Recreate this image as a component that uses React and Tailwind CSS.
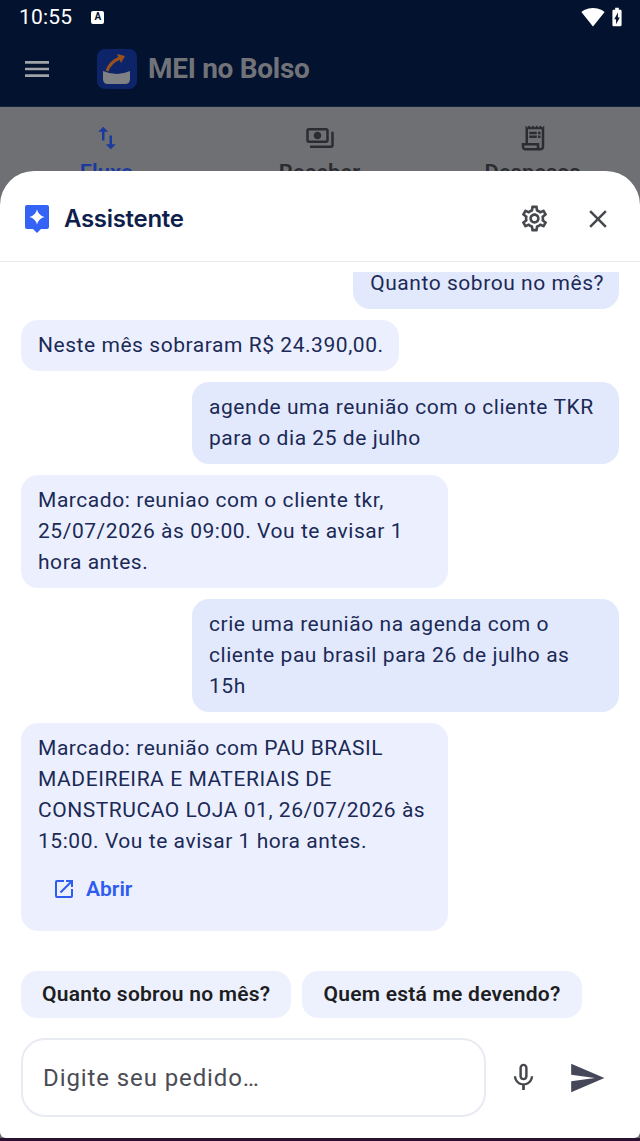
import React from "react";
import {
  MdMenu,
  MdSwapVert,
  MdOutlinePayments,
  MdOutlineReceiptLong,
  MdOutlineSettings,
  MdClose,
  MdOpenInNew,
  MdMicNone,
  MdSend,
  MdSignalWifi4Bar,
  MdBatteryChargingFull,
} from "react-icons/md";

function Bubble({ mine, className = "", children }) {
  return (
    <div
      className={`shrink-0 rounded-[17px] py-[10px] pr-[15px] pl-[17px] text-[21px] leading-[31px] tracking-[0.55px] text-[#1b2a56] ${
        mine ? "self-end bg-[#e3e9fc]" : "self-start bg-[#ecf0fe]"
      } ${className}`}
    >
      {children}
    </div>
  );
}

function Tab({ icon, label, active }) {
  return (
    <div className="flex w-[213px] flex-col items-center pt-[16px]">
      <div className={active ? "text-[#1b3a9e]" : "text-[#2b2c31]"}>{icon}</div>
      <div className={`mt-[7px] text-[22px] leading-[26px] font-semibold ${active ? "text-[#1b3a9e]" : "text-[#2b2c31]"}`}>
        {label}
      </div>
    </div>
  );
}

function Logo() {
  return (
    <svg width="40" height="40" viewBox="0 0 40 40">
      <rect width="40" height="40" rx="8" fill="#0d2568" />
      <path d="M6 22 Q20 28 33 22 V30 Q33 35 28 35 H11 Q6 35 6 30 Z" fill="#7f8185" />
      <path d="M10 22 Q13 13 23 9" fill="none" stroke="#98501c" strokeWidth="3" />
      <path d="M20 5 L28 7 L24 14 Z" fill="#98501c" />
    </svg>
  );
}

function AssistantIcon() {
  return (
    <svg width="26" height="30" viewBox="0 0 26 30">
      <path
        d="M3 1 H23 Q25 1 25 3 V23 Q25 25 23 25 H17 L13 29 L9 25 H3 Q1 25 1 23 V3 Q1 1 3 1 Z"
        fill="#3563f5"
      />
      <path d="M13 5.5 Q14.5 11.5 20.5 13 Q14.5 14.5 13 20.5 Q11.5 14.5 5.5 13 Q11.5 11.5 13 5.5 Z" fill="#fff" />
    </svg>
  );
}

export default function App() {
  return (
    <div className="flex h-[1141px] w-[640px] flex-col overflow-hidden bg-[#6f7074] font-['Roboto',sans-serif]">
      {/* status bar and app bar, dimmed by the sheet */}
      <header className="h-[107px] shrink-0 border-b border-[#15203c] bg-[#02122f]">
        <div className="flex h-[32px] items-center justify-between pt-[2px] pr-[15px] pl-[19px] text-white">
          <div className="flex items-center gap-[19px]">
            <span className="text-[21px] leading-none tracking-[0.2px]">10:55</span>
            <span className="flex h-[13px] w-[13px] items-center justify-center rounded-[2px] bg-white text-[10px] leading-none font-bold text-[#02122f]">
              A
            </span>
          </div>
          <div className="flex items-center gap-[4px]">
            <MdSignalWifi4Bar size={24} />
            <MdBatteryChargingFull size={22} className="-mx-[3px]" />
          </div>
        </div>
        <div className="mt-[12px] flex h-[50px] items-center pl-[21px]">
          <MdMenu size={32} className="text-[#a2a3a6]" />
          <div className="ml-[44px]">
            <Logo />
          </div>
          <span className="ml-[11px] text-[28px] font-bold tracking-[-0.3px] text-[#727378]">MEI no Bolso</span>
        </div>
      </header>

      <div className="flex h-[64px] shrink-0 overflow-hidden">
        <Tab active label="Fluxo" icon={<MdSwapVert size={30} />} />
        <Tab label="Receber" icon={<MdOutlinePayments size={30} />} />
        <Tab label="Despesas" icon={<MdOutlineReceiptLong size={30} />} />
      </div>

      <section className="flex min-h-0 flex-1 flex-col rounded-t-[34px] rounded-b-[6px] bg-white">
        <div className="flex h-[91px] shrink-0 items-center border-b border-[#e9e9ee] pt-[5px] pr-[27px] pl-[24px]">
          <AssistantIcon />
          <h1 className="ml-[14px] font-['Inter',sans-serif] text-[24px] font-semibold tracking-[-0.3px] text-[#0f1f4d]">
            Assistente
          </h1>
          <MdOutlineSettings size={31} className="ml-auto text-[#46484e]" />
          <MdClose size={30} className="ml-[33px] text-[#46484e]" />
        </div>

        <div className="mx-[21px] mt-[10px] flex min-h-0 flex-1 flex-col justify-end gap-[11px] overflow-hidden pb-[40px]">
          <Bubble mine>Quanto sobrou no mês?</Bubble>
          <Bubble>Neste mês sobraram R$ 24.390,00.</Bubble>
          <Bubble mine className="w-[427px]">
            agende uma reunião com o cliente TKR para o dia 25 de julho
          </Bubble>
          <Bubble className="w-[427px]">
            Marcado: reuniao com o cliente tkr, 25/07/2026 às 09:00. Vou te avisar 1 hora antes.
          </Bubble>
          <Bubble mine className="w-[427px]">
            crie uma reunião na agenda com o cliente pau brasil para 26 de julho as 15h
          </Bubble>
          <Bubble className="w-[427px]">
            Marcado: reunião com PAU BRASIL MADEIREIRA E MATERIAIS DE CONSTRUCAO LOJA 01, 26/07/2026 às 15:00. Vou te avisar 1 hora antes.
            <div className="mt-[20px] mb-[20px] flex h-[24px] items-center pl-[14px] text-[#2f5cf0]">
              <MdOpenInNew size={24} />
              <span className="ml-[10px] text-[21px] leading-[24px] font-semibold tracking-normal">Abrir</span>
            </div>
          </Bubble>
        </div>

        <div className="flex shrink-0 gap-[11px] px-[21px]">
          {["Quanto sobrou no mês?", "Quem está me devendo?"].map((chip) => (
            <div
              key={chip}
              className="flex h-[47px] items-center rounded-[16px] bg-[#edf1fd] px-[21px] text-[21px] font-semibold tracking-[0.25px] text-[#1d1e22]"
            >
              {chip}
            </div>
          ))}
        </div>

        <div className="mt-[20px] mb-[21px] flex shrink-0 items-center pl-[21px]">
          <div className="flex h-[79px] w-[465px] items-center rounded-[24px] border-2 border-[#e9ebf2] pl-[20px] text-[24px] tracking-[0.9px] text-[#4b4c55]">
            Digite seu pedido…
          </div>
          <MdMicNone size={33} className="ml-[21px] text-[#46484e]" />
          <MdSend size={38} className="ml-[28px] text-[#46485a]" />
        </div>
      </section>
      <div className="h-[3px] shrink-0 bg-[#2c1230]" />
    </div>
  );
}
